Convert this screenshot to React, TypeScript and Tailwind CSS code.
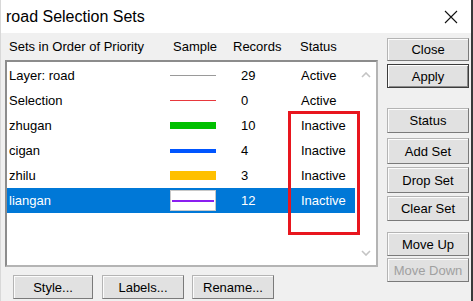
import React from "react";

type Row = { name: string; records: string; status: string; sample: React.ReactNode; selected?: boolean };

const Btn = ({ label, className = "", disabled = false, isDefault = false }: { label: string; className?: string; disabled?: boolean; isDefault?: boolean }) => (
  <div
    className={
      "flex items-center justify-center bg-[#e1e1e1] text-[13px] leading-none " +
      (isDefault
        ? "border border-[#3c3c3c] shadow-[inset_1px_1px_0_#ffffff,inset_-1px_-1px_0_#8a8a8a] "
        : "border border-[#b4b4b4] border-r-[#7a7a7a] border-b-[#7a7a7a] shadow-[inset_1px_1px_0_#fcfcfc] ") +
      (disabled ? "text-[#a0a0a0] " : "text-black ") +
      className
    }
  >
    {label}
  </div>
);

export default function App() {
  const rows: Row[] = [
    { name: "Layer: road", records: "29", status: "Active", sample: <div className="w-[46px] h-[1px] bg-[#9a9a9a]" /> },
    { name: "Selection", records: "0", status: "Active", sample: <div className="w-[46px] h-[1px] bg-[#e8383d]" /> },
    { name: "zhugan", records: "10", status: "Inactive", sample: <div className="w-[46px] h-[7px] bg-[#00c000]" /> },
    { name: "cigan", records: "4", status: "Inactive", sample: <div className="w-[46px] h-[4px] bg-[#0055ff]" /> },
    { name: "zhilu", records: "3", status: "Inactive", sample: <div className="w-[46px] h-[9px] bg-[#ffc000]" /> },
    {
      name: "liangan",
      records: "12",
      status: "Inactive",
      selected: true,
      sample: (
        <div className="w-[46px] h-[21px] bg-white border border-[#c8c8c8] flex items-center justify-center">
          <div className="w-[42px] h-[2px] bg-[#8a1ef0]" />
        </div>
      ),
    },
  ];

  return (
    <div className="relative w-[473px] h-[301px] overflow-hidden bg-[#f0f0f0] border-r-2 border-r-[#3a3a3a] border-l border-l-[#d8d8d8] font-['Liberation_Sans',Arial,sans-serif] text-[13px] text-black">
      {/* Title bar */}
      <div className="h-[33px] bg-white flex items-center justify-between pl-[5px] pr-[13px]">
        <span className="text-[16px] leading-none">road Selection Sets</span>
        <svg width="14" height="14" viewBox="0 0 14 14">
          <path d="M1 1 L13 13 M13 1 L1 13" stroke="#111" strokeWidth="1.1" fill="none" />
        </svg>
      </div>

      <div className="flex">
        {/* Left column */}
        <div className="w-[377px] pl-[4px] flex flex-col">
          <div className="h-[27px] flex items-center pl-[4px] leading-none">
            <span className="w-[164px]">Sets in Order of Priority</span>
            <span className="w-[60px]">Sample</span>
            <span className="w-[67px]">Records</span>
            <span>Status</span>
          </div>
          <div className="h-[207px] bg-white border-2 border-t-[#8c8c8c] border-l-[#8c8c8c] border-b-[#b4b4b4] border-r-[#b4b4b4] flex">
            <div className="w-[348px] pt-[1px] flex flex-col">
              {rows.map((r) => (
                <div
                  key={r.name}
                  className={
                    "h-[25px] flex items-center leading-none " + (r.selected ? "bg-[#0078d7] text-white" : "")
                  }
                >
                  <span className="w-[163px] pl-[2px]">{r.name}</span>
                  <div className="w-[46px] flex items-center">{r.sample}</div>
                  <span className="w-[25px]" />
                  <span className="w-[60px]">{r.records}</span>
                  <span>{r.status}</span>
                </div>
              ))}
            </div>
            <div className="flex-1 flex flex-col items-center justify-between pt-[10px] pb-[9px]">
              <svg width="10" height="6" viewBox="0 0 10 6">
                <path d="M1 5 L5 1 L9 5" stroke="#c4c4c4" strokeWidth="1.6" fill="none" />
              </svg>
              <svg width="10" height="6" viewBox="0 0 10 6">
                <path d="M1 1 L5 5 L9 1" stroke="#c4c4c4" strokeWidth="1.6" fill="none" />
              </svg>
            </div>
          </div>
          <div className="mt-[8px] flex pl-[8px]">
            <Btn label="Style..." className="w-[80px] h-[24px]" />
            <Btn label="Labels..." className="w-[82px] h-[24px] ml-[9px]" />
            <Btn label="Rename..." className="w-[82px] h-[24px] ml-[8px]" />
          </div>
        </div>

        {/* Right column */}
        <div className="ml-[9px] pt-[5px] w-[82px] flex flex-col">
          <Btn label="Close" className="h-[23px]" />
          <Btn label="Apply" isDefault className="h-[24px] mt-[3px]" />
          <Btn label="Status" className="h-[25px] mt-[20px]" />
          <Btn label="Add Set" className="h-[26px] mt-[5px]" />
          <Btn label="Drop Set" className="h-[26px] mt-[3px]" />
          <Btn label="Clear Set" className="h-[25px] mt-[3px]" />
          <Btn label="Move Up" className="h-[24px] mt-[11px]" />
          <Btn label="Move Down" disabled className="h-[24px] mt-[2px]" />
        </div>
      </div>

      {/* Red annotation rectangle */}
      <div className="absolute left-[287px] top-[111px] w-[72px] h-[124px] border-[3px] border-[#e8161e]" />
    </div>
  );
}
